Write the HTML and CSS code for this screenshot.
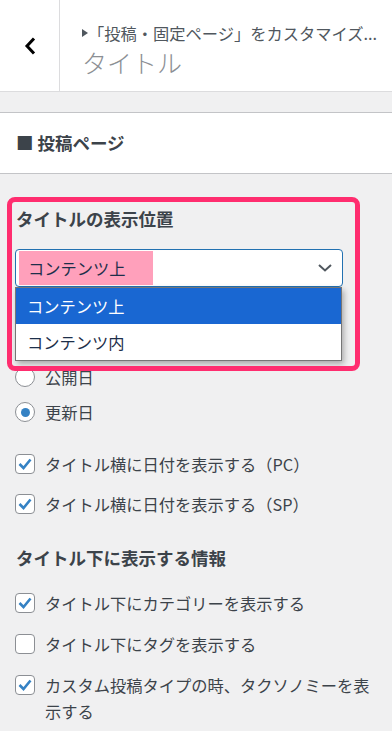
FILE: index.html
```html
<!DOCTYPE html>
<html lang="ja">
<head>
<meta charset="UTF-8">
<meta name="viewport" content="width=device-width, initial-scale=1.0">
<title>タイトル</title>
<link rel="stylesheet" href="styles.css">
</head>
<body>
<div class="header">
  <button class="back-btn" aria-label="戻る">
    <svg width="12" height="18" viewBox="0 0 12 18"><path d="M10 1.5 L3 9 L10 16.5" fill="none" stroke="#000" stroke-width="3"/></svg>
  </button>
  <div class="header-title">
    <div class="crumb"><svg class="crumb-arrow" width="6" height="8" viewBox="0 0 6 8"><path d="M0 0 L6 4 L0 8 Z" fill="#50575e"/></svg>「投稿・固定ページ」をカスタマイズ...</div>
    <h3 class="section-title">タイトル</h3>
  </div>
</div>

<div class="section-head">■ 投稿ページ</div>

<div class="controls">
  <!-- title position (dropdown open) -->
  <div class="control-select">
    <div class="annotation"></div>
    <div class="control-title">タイトルの表示位置</div>
    <div class="select-wrap">
      <div class="select-box">
        <span class="select-value">コンテンツ上</span>
        <svg class="select-arrow" width="14" height="8" viewBox="0 0 14 8"><path d="M1 1 L7 6.5 L13 1" fill="none" stroke="#50575e" stroke-width="2"/></svg>
      </div>
      <ul class="select-list">
        <li class="selected">コンテンツ上</li>
        <li>コンテンツ内</li>
      </ul>
    </div>
  </div>

  <div class="radio-list">
    <label class="row"><span class="radio"></span>公開日</label>
    <label class="row"><span class="radio checked"></span>更新日</label>
  </div>

  <div class="check-list first-checks">
    <label class="row"><span class="checkbox checked"><svg width="14" height="12" viewBox="0 0 14 12"><path d="M1.5 6 L5.5 10 L12.5 1.5" fill="none" stroke="#3582c4" stroke-width="2.6"/></svg></span>タイトル横に日付を表示する（PC）</label>
    <label class="row"><span class="checkbox checked"><svg width="14" height="12" viewBox="0 0 14 12"><path d="M1.5 6 L5.5 10 L12.5 1.5" fill="none" stroke="#3582c4" stroke-width="2.6"/></svg></span>タイトル横に日付を表示する（SP）</label>
  </div>

  <div class="control-title second-title">タイトル下に表示する情報</div>

  <div class="check-list info-checks">
    <label class="row"><span class="checkbox checked"><svg width="14" height="12" viewBox="0 0 14 12"><path d="M1.5 6 L5.5 10 L12.5 1.5" fill="none" stroke="#3582c4" stroke-width="2.6"/></svg></span>タイトル下にカテゴリーを表示する</label>
    <label class="row"><span class="checkbox"></span>タイトル下にタグを表示する</label>
    <label class="row"><span class="checkbox checked"><svg width="14" height="12" viewBox="0 0 14 12"><path d="M1.5 6 L5.5 10 L12.5 1.5" fill="none" stroke="#3582c4" stroke-width="2.6"/></svg></span>カスタム投稿タイプの時、タクソノミーを表示する</label>
  </div>
</div>
</body>
</html>
```

FILE: styles.css
```css
/* General */
body {
  margin: 0;
  padding: 0;
  background-color: #f0f0f1;
  font-family: "Noto Sans CJK JP", "Noto Sans", sans-serif;
  font-size: 16.25px;
  color: #3c434a;
}

/* Header */
.header {
  display: flex;
  height: 91px;
  background-color: #fff;
  border-bottom: 1px solid #dcdcde;
}

.back-btn {
  width: 60px;
  height: 91px;
  padding: 0 0 0 1px;
  border: none;
  border-right: 1px solid #dcdcde;
  background: #fff;
  display: flex;
  align-items: center;
  justify-content: center;
  box-sizing: border-box;
}

.header-title {
  padding: 22px 0 0 22px;
  min-width: 0;
}

.crumb {
  display: flex;
  align-items: center;
  line-height: 22px;
  color: #50575e;
  white-space: nowrap;
}

.crumb-arrow {
  margin-right: 0;
}

.section-title {
  margin: 3px 0 0 0;
  font-size: 25px;
  font-weight: 300;
  line-height: 30px;
  color: #8c8f94;
}

/* Section heading */
.section-head {
  margin-top: 20px;
  height: 60px;
  line-height: 60px;
  padding-left: 16px;
  background-color: #fff;
  border-top: 1px solid #c3c4c7;
  border-bottom: 1px solid #c3c4c7;
  font-size: 17.5px;
  font-weight: bold;
  color: #3c434a;
}

/* Controls */
.controls {
  padding: 33px 16px 0 15px;
}

.control-title {
  font-size: 17.5px;
  font-weight: bold;
  line-height: 24px;
  color: #3c434a;
  padding-left: 1px;
}

.control-select {
  position: relative;
}

.annotation {
  position: absolute;
  top: -10px;
  left: -8px;
  width: 353px;
  height: 174px;
  box-sizing: border-box;
  border: 5px solid #ff2d6f;
  border-radius: 8px;
  z-index: 3;
  pointer-events: none;
}

.select-wrap {
  position: relative;
  margin-top: 18px;
  width: 328px;
}

.select-box {
  display: flex;
  align-items: center;
  height: 38px;
  box-sizing: border-box;
  padding-right: 10px;
  border: 1px solid #2271b1;
  border-radius: 4px;
  background-color: #fff;
}

.select-value {
  display: flex;
  align-items: center;
  height: 34px;
  width: 134px;
  box-sizing: border-box;
  margin-left: 3px;
  padding-left: 9px;
  background-color: #ffa0bb;
  color: #1d2f4a;
}

.select-arrow {
  margin-left: auto;
}

.select-list {
  position: absolute;
  top: 38px;
  left: 0;
  width: 327px;
  box-sizing: border-box;
  margin: 0;
  padding: 0;
  list-style: none;
  background-color: #fff;
  border: 1px solid #767676;
  box-shadow: 2px 3px 6px rgba(0, 0, 0, 0.3);
  z-index: 2;
}

.select-list li {
  height: 36px;
  line-height: 36px;
  padding-left: 11px;
  color: #1d2f4a;
}

.select-list li.selected {
  background-color: #1967d2;
  color: #fff;
}

/* Rows */
.row {
  display: flex;
  align-items: flex-start;
  gap: 10px;
  line-height: 26px;
  color: #3c434a;
}

.radio-list {
  margin-top: 77px;
  display: flex;
  flex-direction: column;
  gap: 9px;
}

.radio {
  flex: none;
  width: 20px;
  height: 20px;
  margin-top: 3px;
  box-sizing: border-box;
  border: 1px solid #8c8f94;
  border-radius: 50%;
  background-color: #fff;
  display: flex;
  align-items: center;
  justify-content: center;
}

.radio.checked::after {
  content: "";
  width: 9px;
  height: 9px;
  border-radius: 50%;
  background-color: #3582c4;
}

.check-list {
  display: flex;
  flex-direction: column;
}

.first-checks {
  margin-top: 26px;
  gap: 14px;
}

.second-title {
  margin-top: 29px;
}

.info-checks {
  margin-top: 20px;
  gap: 15px;
}

.checkbox {
  flex: none;
  width: 20px;
  height: 20px;
  margin-top: 3px;
  box-sizing: border-box;
  border: 1px solid #8c8f94;
  border-radius: 4px;
  background-color: #fff;
  display: flex;
  align-items: center;
  justify-content: center;
}
```
